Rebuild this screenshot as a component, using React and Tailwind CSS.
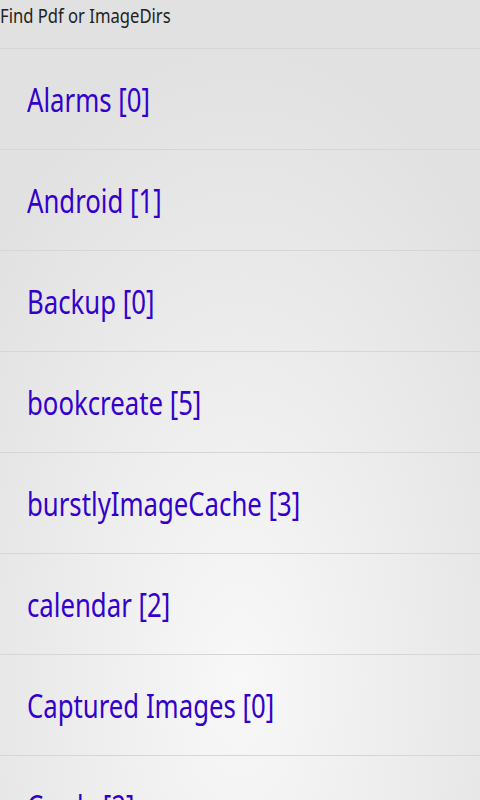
const dirs = [
  { name: 'Alarms', count: 0 },
  { name: 'Android', count: 1 },
  { name: 'Backup', count: 0 },
  { name: 'bookcreate', count: 5 },
  { name: 'burstlyImageCache', count: 3 },
  { name: 'calendar', count: 2 },
  { name: 'Captured Images', count: 0 },
  { name: 'Cards', count: 2 },
]

export default function App() {
  return (
    <div
      className="h-[800px] w-[480px] overflow-hidden bg-[radial-gradient(ellipse_70%_80%_at_50%_85%,#f8f8f8,#e1e1e1)]"
      style={{ fontFamily: '"Noto Sans", "Open Sans", sans-serif' }}
    >
      {/* title */}
      <div className="h-[49px] border-b border-[#d6d6d6] pt-[2px] text-[19px] leading-[28px] text-[#222]">
        <span className="inline-block origin-left scale-x-[0.875] whitespace-nowrap">Find Pdf or ImageDirs</span>
      </div>

      {/* dir list */}
      <ul>
        {dirs.map((d) => (
          <li
            key={d.name}
            className="flex h-[101px] items-center border-b border-[#d6d6d6] pl-[27px] pt-[2px] text-[33px] leading-[40px] text-[#3300cc]"
          >
            <span className="inline-block origin-left scale-x-[0.78] whitespace-nowrap">
              {d.name} [{d.count}]
            </span>
          </li>
        ))}
      </ul>
    </div>
  )
}
